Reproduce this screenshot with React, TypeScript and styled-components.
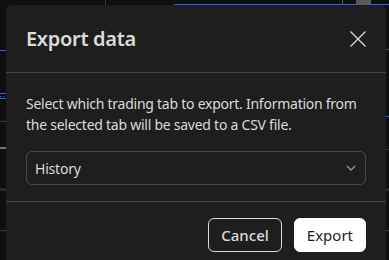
import React from "react";
import styled, { createGlobalStyle } from "styled-components";

const Global = createGlobalStyle`
  html, body { margin: 0; padding: 0; background: #0f0f0f; overflow: hidden; }
  * { box-sizing: border-box; }
`;

const Page = styled.div`
  position: relative;
  width: 389px;
  height: 260px;
  overflow: hidden;
  background: #0f0f0f;
  padding: 5px 3px 0 6px;
  font-family: "Noto Sans", "Open Sans", sans-serif;
`;

const Backdrop = styled.svg`
  position: absolute;
  inset: 0;
  width: 389px;
  height: 260px;
`;

const Dialog = styled.div`
  position: relative;
  width: 380px;
  height: 280px;
  background: #1e1e1e;
  border-radius: 6px;
  display: flex;
  flex-direction: column;
`;

const Header = styled.div`
  height: 68px;
  display: flex;
  align-items: center;
  justify-content: space-between;
  padding: 0 20px;
  border-bottom: 1px solid #434343;
`;

const Title = styled.h2`
  margin: 0;
  font-size: 20px;
  font-weight: 600;
  color: #dbdbdb;
  letter-spacing: -0.3px;
`;

const Close = styled.button`
  width: 24px;
  height: 24px;
  padding: 0;
  margin-right: -4px;
  border: none;
  background: transparent;
  display: flex;
  align-items: center;
  justify-content: center;
`;

const Body = styled.div`
  padding: 20px 20px 16px;
  border-bottom: 1px solid #434343;
  display: flex;
  flex-direction: column;
  gap: 16px;
`;

const Text = styled.p`
  margin: 0;
  font-size: 14px;
  line-height: 21px;
  letter-spacing: -0.25px;
  color: #dbdbdb;
`;

const Select = styled.div`
  height: 34px;
  border: 1px solid #4a4a4a;
  border-radius: 6px;
  display: flex;
  align-items: center;
  justify-content: space-between;
  padding: 0 9px 0 8px;
  font-size: 14px;
  letter-spacing: -0.2px;
  color: #dbdbdb;
`;

const Footer = styled.div`
  padding: 16px 20px;
  display: flex;
  justify-content: flex-end;
  gap: 12px;
`;

const Button = styled.button<{ $primary?: boolean }>`
  height: 34px;
  padding: 0 12px;
  border-radius: 6px;
  font-family: inherit;
  font-size: 15px;
  letter-spacing: 0;
  border: 1px solid ${(p) => (p.$primary ? "#ffffff" : "#dbdbdb")};
  background: ${(p) => (p.$primary ? "#ffffff" : "transparent")};
  color: ${(p) => (p.$primary ? "#1e1e1e" : "#dbdbdb")};
  font-weight: ${(p) => (p.$primary ? 400 : 500)};
`;

export default function App() {
  return (
    <Page>
      <Global />
      <Backdrop viewBox="0 0 389 260">
        <rect x="105" y="0" width="1" height="5" fill="#3a3a3a" />
        <rect x="174" y="4" width="215" height="1" fill="#2962ff" />
        <rect x="342" y="0" width="1" height="5" fill="#555" />
        <rect x="356" y="0" width="15" height="5" fill="#5a5a5a" />
        <rect x="0" y="50" width="6" height="1" fill="#2962ff" />
        <rect x="0" y="93" width="6" height="1" fill="#2962ff" />
        <rect x="0" y="96" width="1" height="1" fill="#2962ff" />
        <rect x="3" y="96" width="1" height="1" fill="#2962ff" />
        <rect x="0" y="98" width="6" height="1" fill="#2962ff" />
        <rect x="0" y="121" width="6" height="1" fill="#3a3a3a" />
        <rect x="0" y="147" width="6" height="2" fill="#777" />
        <rect x="0" y="188" width="6" height="3" fill="#2a2a2a" />
        <rect x="0" y="230" width="6" height="1" fill="#3a3a3a" />
        <rect x="386" y="49" width="3" height="1" fill="#555" />
        <rect x="386" y="116" width="3" height="1" fill="#2962ff" />
        <rect x="386" y="149" width="3" height="1" fill="#3a3a3a" />
        <rect x="386" y="188" width="3" height="3" fill="#2a2a2a" />
        <rect x="386" y="230" width="3" height="1" fill="#3a3a3a" />
      </Backdrop>
      <Dialog>
        <Header>
          <Title>Export data</Title>
          <Close aria-label="Close">
            <svg width="18" height="18" viewBox="0 0 18 18" fill="none">
              <path d="M1.5 1.5l15 15M16.5 1.5l-15 15" stroke="#dbdbdb" strokeWidth="1.3" />
            </svg>
          </Close>
        </Header>
        <Body>
          <Text>
            Select which trading tab to export. Information from the selected tab will be saved to a CSV file.
          </Text>
          <Select>
            <span>History</span>
            <svg width="10" height="6" viewBox="0 0 10 6" fill="none">
              <path d="M1 1l4 4 4-4" stroke="#9a9a9a" strokeWidth="1.3" />
            </svg>
          </Select>
        </Body>
        <Footer>
          <Button>Cancel</Button>
          <Button $primary>Export</Button>
        </Footer>
      </Dialog>
    </Page>
  );
}
